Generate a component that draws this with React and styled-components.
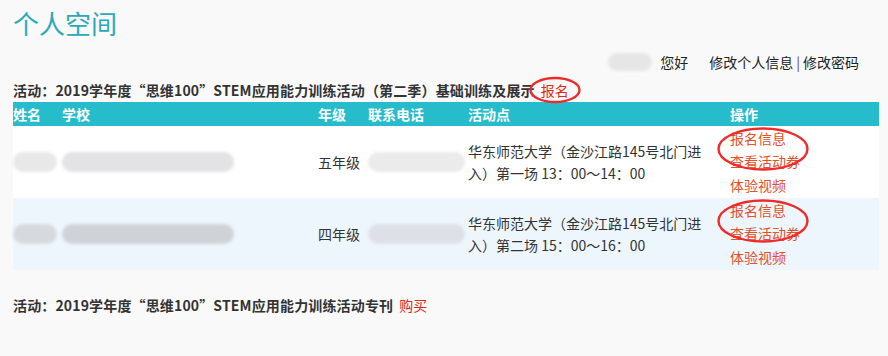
import styled, { createGlobalStyle } from 'styled-components'

const GlobalStyle = createGlobalStyle`
  body {
    margin: 0;
    background: #f9f9f9;
    font-family: "Noto Sans CJK SC", "Noto Sans", sans-serif;
    font-size: 14px;
    color: #333;
  }
`

const Page = styled.div`
  padding: 0 9px 0 13px;
`

const Title = styled.h1`
  margin: 0;
  font-size: 26px;
  font-weight: normal;
  line-height: 46px;
  color: #2aa9b8;
`

const UserBar = styled.div`
  display: flex;
  justify-content: flex-end;
  align-items: center;
  height: 32px;
  padding-right: 20px;
  font-size: 14px;
  color: #222;
`

const Greeting = styled.span`
  display: flex;
  align-items: center;
  gap: 8px;
  margin-right: 21px;
`

const Sep = styled.span`
  margin: 0 3px;
  color: #6a3b7a;
`

const Blur = styled.span`
  display: inline-block;
  width: ${p => p.w}px;
  height: ${p => p.h || 18}px;
  border-radius: 10px;
  background: ${p => p.tone || '#e8e8e8'};
  filter: blur(1.5px);
  flex: none;
`

const ActivityLine = styled.div`
  display: flex;
  align-items: center;
  height: 24px;
  font-weight: bold;
  letter-spacing: 0.15px;
  color: #333;
  margin-top: ${p => p.top || 0}px;
`

const RedAction = styled.span`
  position: relative;
  margin-left: 6px;
  font-weight: normal;
  color: #e0261b;
`

const Ring = styled.svg`
  position: absolute;
  overflow: visible;
  pointer-events: none;
`

const CenterRing = styled(Ring)`
  left: 50%;
  top: 50%;
  transform: translate(-50%, -50%);
`

const Table = styled.div`
  display: grid;
  grid-template-columns: 49px 256px 50px 100px 262px 1fr;
  width: 866px;
`

const HeadCell = styled.div`
  background: #27bccb;
  color: #fff;
  font-weight: bold;
  height: 24px;
  line-height: 24px;
`

const Cell = styled.div`
  position: relative;
  display: flex;
  align-items: center;
  height: 72px;
  background: ${p => (p.alt ? '#eef6fd' : '#fff')};
  line-height: 22px;
`

const Place = styled.div`
  display: flex;
  flex-direction: column;
`

const OpsList = styled.div`
  display: flex;
  flex-direction: column;
  line-height: 23.5px;
`

const OpLink = styled.a`
  color: #e3502a;
  text-decoration: none;
`

const EllipseShape = ({ w, h }) => (
  <ellipse cx={w / 2} cy={h / 2} rx={w / 2 - 1.5} ry={h / 2 - 1.5} fill="none" stroke="#ee2b2b" strokeWidth="2.4" />
)

const rows = [
  { grade: '五年级', line: '入）第一场 13：00～14：00', tone: ['#e9e8e8', '#e3e2e4', '#ebebeb'] },
  { grade: '四年级', line: '入）第二场 15：00～16：00', tone: ['#d6dade', '#cfd3d8', '#dde1e7'], alt: true },
]

const App = () => (
  <Page>
    <GlobalStyle />
    <Title>个人空间</Title>
    <UserBar>
      <Greeting>
        <Blur w={44} h={18} tone="#e6e6e6" />
        <span>您好</span>
      </Greeting>
      <span>修改个人信息</span>
      <Sep>|</Sep>
      <span>修改密码</span>
    </UserBar>
    <ActivityLine>
      活动：2019学年度“思维100”STEM应用能力训练活动（第二季）基础训练及展示
      <RedAction>
        报名
        <CenterRing width={52} height={27}>
          <EllipseShape w={52} h={27} />
        </CenterRing>
      </RedAction>
    </ActivityLine>
    <Table>
      <HeadCell>姓名</HeadCell>
      <HeadCell>学校</HeadCell>
      <HeadCell>年级</HeadCell>
      <HeadCell>联系电话</HeadCell>
      <HeadCell>活动点</HeadCell>
      <HeadCell>操作</HeadCell>
      {rows.map(r => (
        <>
          <Cell alt={r.alt}>
            <Blur w={44} h={20} tone={r.tone[0]} />
          </Cell>
          <Cell alt={r.alt}>
            <Blur w={172} h={20} tone={r.tone[1]} />
          </Cell>
          <Cell alt={r.alt}>{r.grade}</Cell>
          <Cell alt={r.alt}>
            <Blur w={97} h={20} tone={r.tone[2]} />
          </Cell>
          <Cell alt={r.alt}>
            <Place>
              <span>华东师范大学（金沙江路145号北门进</span>
              <span>{r.line}</span>
            </Place>
          </Cell>
          <Cell alt={r.alt}>
            <OpsList>
              <OpLink>报名信息</OpLink>
              <OpLink>查看活动劵</OpLink>
              <OpLink>体验视频</OpLink>
            </OpsList>
            <Ring width={92} height={44} style={{ left: -13, top: 1 }}>
              <EllipseShape w={92} h={44} />
            </Ring>
          </Cell>
        </>
      ))}
    </Table>
    <ActivityLine top={23}>
      活动：2019学年度“思维100”STEM应用能力训练活动专刊
      <RedAction>购买</RedAction>
    </ActivityLine>
  </Page>
)

export default App
